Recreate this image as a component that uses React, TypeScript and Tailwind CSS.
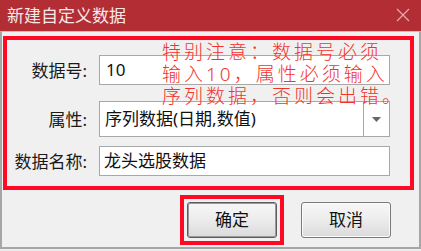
import type { ReactNode } from 'react';

function Field({ label, children, className = '' }: { label: string; children: ReactNode; className?: string }) {
  return (
    <div className={`flex items-center ${className}`}>
      <span className="w-[80px] shrink-0 text-right text-[17px] leading-none text-[#1a1a1a]">{label}</span>
      <div className="ml-[12px] h-full w-[291px]">{children}</div>
    </div>
  );
}

function Button({ label, primary = false }: { label: string; primary?: boolean }) {
  return (
    <button
      type="button"
      className={`flex h-[36px] w-[90px] items-center justify-center rounded-[3px] border bg-linear-to-b from-[#f7f7f7] via-[#ececec] to-[#dadada] text-[17px] text-[#111] shadow-[inset_0_0_0_1px_#fbfbfb] ${
        primary ? 'border-[#5c5c5c] ring-1 ring-inset ring-[#9a9a9a]' : 'border-[#7a7a7a]'
      }`}
    >
      {label}
    </button>
  );
}

export default function App() {
  return (
    <div className="h-[251px] w-[421px] bg-[#ededed] font-['Noto_Sans','Noto_Sans_CJK_SC',sans-serif]">
      <div className="flex h-[31px] items-center justify-between bg-[#b22e34] pl-[7px] pr-[11px]">
        <span className="text-[17px] leading-none text-[#f7e9e9]">新建自定义数据</span>
        <svg width="14" height="14" viewBox="0 0 14 14" className="mt-[-1px]">
          <path d="M1 1 L13 13 M13 1 L1 13" stroke="#e6abad" strokeWidth="1.2" fill="none" />
        </svg>
      </div>

      <div className="flex h-[218px] flex-col border-x-2 border-b-2 border-t border-[#a6a6a6] border-t-[#d9b6b8] bg-[#f0f0f0] pt-[4px]">
        <div className="relative ml-[1px] flex h-[154px] w-[411px] flex-col border-4 border-[#ff0a22] pt-[15px]">
          <Field label="数据号:" className="h-[30px]">
            <div className="flex h-full items-center border border-[#a8a8a8] bg-white pl-[6px] text-[17px] text-[#111]">10</div>
          </Field>
          <Field label="属性:" className="mt-[16px] h-[36px]">
            <div className="flex h-full border border-[#a8a8a8] bg-white">
              <div className="flex flex-1 items-center pl-[5px] text-[17px] text-[#111]">序列数据(日期,数值)</div>
              <div className="flex w-[26px] items-center justify-center border-l border-[#a8a8a8]">
                <svg width="9" height="5" viewBox="0 0 9 5">
                  <path d="M0 0 H9 L4.5 5 Z" fill="#666" />
                </svg>
              </div>
            </div>
          </Field>
          <Field label="数据名称:" className="mt-[9px] h-[30px]">
            <div className="flex h-full items-center border border-[#a8a8a8] bg-white pl-[4px] text-[17px] text-[#111]">龙头选股数据</div>
          </Field>

          <div className="absolute left-[155px] top-[1px] text-[19px] font-light leading-[22px] tracking-[3px] text-[#f0342c]">
            <p>特别注意：数据号必须</p>
            <p>输入10，属性必须输入</p>
            <p>序列数据，否则会出错。</p>
          </div>
        </div>

        <div className="mt-[5px] flex items-center justify-end gap-[17px] pr-[28px]">
          <div className="border-4 border-[#ff0a22] p-[3px]">
            <Button label="确定" primary />
          </div>
          <Button label="取消" />
        </div>
      </div>
    </div>
  );
}
